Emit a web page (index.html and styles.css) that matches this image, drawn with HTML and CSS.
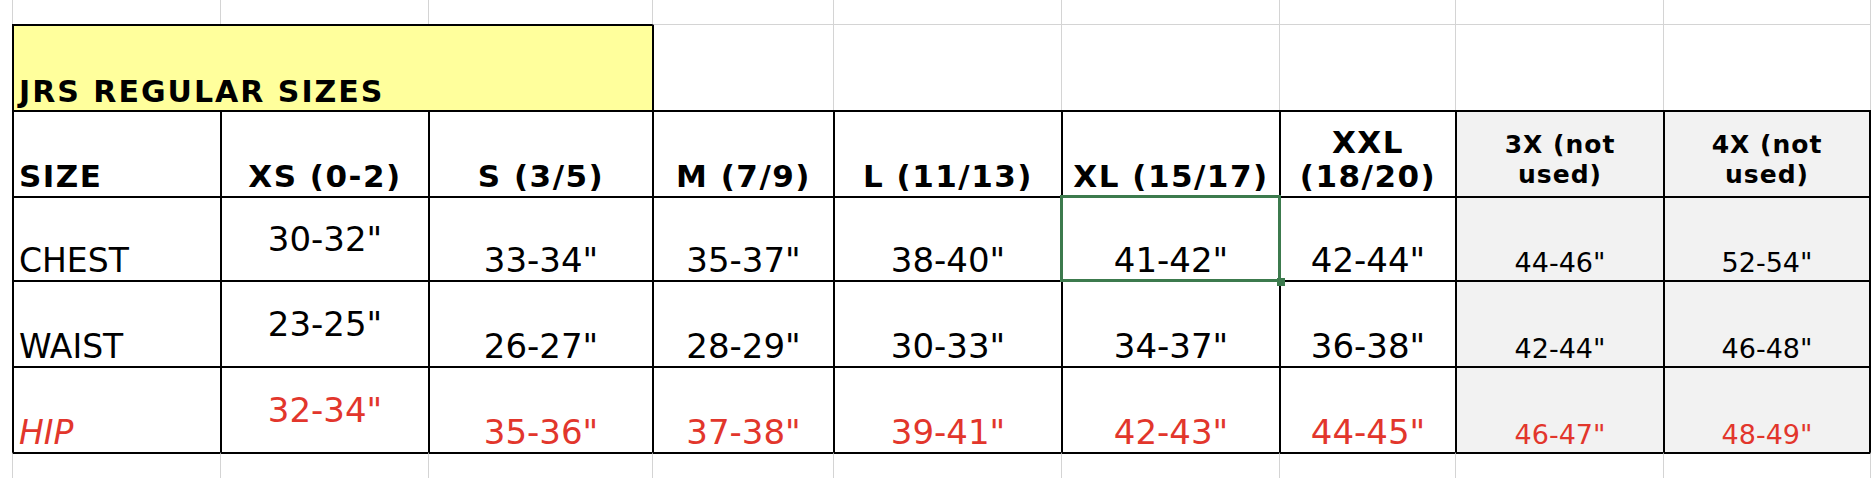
FILE: index.html
```html
<!DOCTYPE html>
<html lang="en">
  <head>
    <meta charset="UTF-8" />
    <meta name="viewport" content="width=device-width, initial-scale=1.0" />
    <title>JRS regular sizes</title>
    <link rel="stylesheet" href="styles.css">
  </head>
  <body>
    <div class="sheet">
      <div class="row row-top">
        <div class="cell"></div>
        <div class="cell"></div>
        <div class="cell"></div>
        <div class="cell"></div>
        <div class="cell"></div>
        <div class="cell"></div>
        <div class="cell"></div>
        <div class="cell"></div>
        <div class="cell"></div>
      </div>

      <div class="row row-title">
        <div class="cell title">JRS REGULAR SIZES</div>
        <div class="cell after-title"></div>
        <div class="cell"></div>
        <div class="cell"></div>
        <div class="cell"></div>
        <div class="cell"></div>
        <div class="cell"></div>
      </div>

      <div class="row row-head table">
        <div class="cell label">SIZE</div>
        <div class="cell">XS (0-2)</div>
        <div class="cell">S (3/5)</div>
        <div class="cell">M (7/9)</div>
        <div class="cell">L (11/13)</div>
        <div class="cell">XL (15/17)</div>
        <div class="cell">XXL<br />(18/20)</div>
        <div class="cell muted">3X (not<br />used)</div>
        <div class="cell muted">4X (not<br />used)</div>
      </div>

      <div class="row row-chest table data">
        <div class="cell label">CHEST</div>
        <div class="cell mid">30-32"</div>
        <div class="cell">33-34"</div>
        <div class="cell">35-37"</div>
        <div class="cell">38-40"</div>
        <div class="cell selected">41-42"</div>
        <div class="cell">42-44"</div>
        <div class="cell muted">44-46"</div>
        <div class="cell muted">52-54"</div>
      </div>

      <div class="row row-waist table data">
        <div class="cell label">WAIST</div>
        <div class="cell mid">23-25"</div>
        <div class="cell">26-27"</div>
        <div class="cell">28-29"</div>
        <div class="cell">30-33"</div>
        <div class="cell">34-37"</div>
        <div class="cell">36-38"</div>
        <div class="cell muted">42-44"</div>
        <div class="cell muted">46-48"</div>
      </div>

      <div class="row row-hip table data red">
        <div class="cell label"><em>HIP</em></div>
        <div class="cell mid">32-34"</div>
        <div class="cell">35-36"</div>
        <div class="cell">37-38"</div>
        <div class="cell">39-41"</div>
        <div class="cell">42-43"</div>
        <div class="cell">44-45"</div>
        <div class="cell muted">46-47"</div>
        <div class="cell muted">48-49"</div>
      </div>

      <div class="row row-bottom">
        <div class="cell"></div>
        <div class="cell"></div>
        <div class="cell"></div>
        <div class="cell"></div>
        <div class="cell"></div>
        <div class="cell"></div>
        <div class="cell"></div>
        <div class="cell"></div>
        <div class="cell"></div>
      </div>
    </div>
  </body>
</html>
```

FILE: styles.css
```css
* {
  box-sizing: border-box;
  margin: 0;
  padding: 0;
}
body {
  width: 1874px;
  height: 478px;
  overflow: hidden;
  background-color: #fff;
  color: #000;
  font-family: 'DejaVu Sans', Verdana, sans-serif;
}
.sheet {
  padding-left: 12px;
}
.row {
  display: grid;
  grid-template-columns: 208px 208px 224px 181px 228px 218px 176px 208px 208px;
}
.row-top {
  height: 24px;
}
.row-title,
.row-head,
.row-waist,
.row-hip {
  height: 86px;
}
.row-chest {
  height: 84px;
}
.row-bottom {
  height: 26px;
}

/* plain spreadsheet grid */
.cell {
  display: flex;
  flex-direction: column;
  justify-content: flex-end;
  align-items: center;
  border-left: 1px solid #d4d4d4;
  text-align: center;
}
.row-top .cell:last-child,
.row-title .cell:last-child,
.row-bottom .cell:last-child {
  border-right: 1px solid #d4d4d4;
}
.row-title .cell {
  border-top: 1px solid #d4d4d4;
}
.row-bottom .cell {
  border-top: 2px solid #000;
}

/* yellow title */
.row-title .title {
  grid-column: span 3;
  align-items: flex-start;
  padding: 0 0 3px 5px;
  background-color: #ffff9c;
  border-left: 2px solid #000;
  border-top: 2px solid #000;
  font-size: 30px;
  font-weight: bold;
  letter-spacing: 2px;
  line-height: 1;
}
.row-title .after-title {
  border-left: 2px solid #000;
}

/* size table */
.table .cell {
  border-left: 2px solid #000;
  border-top: 2px solid #000;
}
.table .cell:last-child {
  border-right: 2px solid #000;
}
.row-head .cell {
  padding-bottom: 3px;
  font-size: 31px;
  font-weight: bold;
  letter-spacing: 1.5px;
  line-height: 34px;
}
.row-head .cell.muted {
  padding-bottom: 6px;
  font-size: 25px;
  letter-spacing: 1px;
  line-height: 30px;
}
.data .cell {
  padding-bottom: 3px;
  font-size: 34px;
  line-height: 1;
}
.data .cell.muted {
  padding-bottom: 4px;
  font-size: 27px;
}
.cell.label {
  align-items: flex-start;
  padding-left: 5px;
}
.data .cell.label {
  font-size: 33px;
}
.cell.mid {
  justify-content: center;
  padding-bottom: 0;
}
.cell.muted {
  background-color: #f2f2f2;
}
.red .cell {
  color: #e2362c;
}

/* active cell */
.cell.selected {
  position: relative;
}
.cell.selected::before {
  content: '';
  position: absolute;
  left: -3px;
  top: -3px;
  right: -2px;
  bottom: -2px;
  border: 3px solid #3c7a4d;
}
.cell.selected::after {
  content: '';
  position: absolute;
  right: -6px;
  bottom: -6px;
  width: 8px;
  height: 8px;
  background-color: #3c7a4d;
}
```
